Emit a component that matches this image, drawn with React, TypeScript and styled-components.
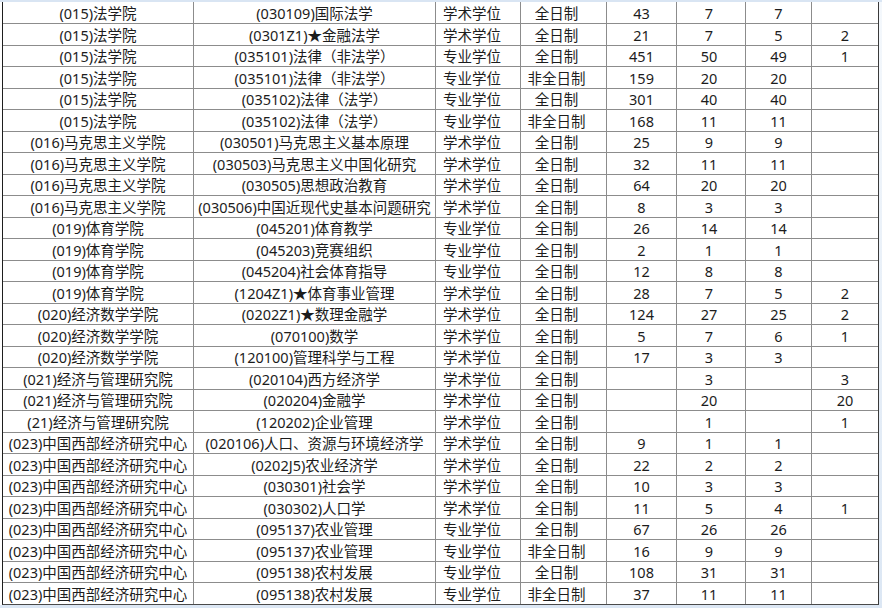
import styled, { createGlobalStyle } from 'styled-components';

const Global = createGlobalStyle`
	html, body { margin: 0; padding: 0; background: #fff; }
	body { font-family: "Noto Sans", "Noto Sans CJK SC", sans-serif; }
`

const Frame = styled.div`
	width: 882px;
	height: 608px;
	overflow: hidden;
	box-sizing: border-box;
	border-top: 2px solid #d9e5f3;
	background: linear-gradient(#f4f8fc, #dce7f4);
`

const Paper = styled.div`
	width: 879px;
	background: #fff;
	padding-left: 2px;
	box-sizing: border-box;
`

const Sheet = styled.div`
	display: grid;
	grid-template-columns: 190px 241px 84px 85px 69px 68px 65px 66px;
	grid-template-rows: 21px repeat(27, 20.5px);
	gap: 1px;
	width: 877px;
	box-sizing: border-box;
	background: #8c8c8c;
	border-left: 1px solid #1e1e1e;
	border-right: 1px solid #3a3a3a;
	border-bottom: 1px solid #4a4a4a;
`

const Cell = styled.div<{ $right?: number; $tight?: boolean }>`
	background: #fff;
	display: flex;
	align-items: flex-end;
	justify-content: center;
	padding-right: ${p => p.$right ?? 0}px;
	font-family: "Noto Sans", "Noto Sans CJK SC", sans-serif;
	font-size: 14.5px;
	line-height: 19px;
	color: #1c1c1c;
	white-space: nowrap;
	overflow: hidden;
	letter-spacing: ${p => (p.$tight ? '-1.05px' : '0')};
`

type Row = [string, string, string, string, string, string, string, string]

const X = '(023)中国西部经济研究中心'

const rows: Row[] = [
	['(015)法学院', '(030109)国际法学', '学术学位', '全日制', '43', '7', '7', ''],
	['(015)法学院', '(0301Z1)★金融法学', '学术学位', '全日制', '21', '7', '5', '2'],
	['(015)法学院', '(035101)法律（非法学）', '专业学位', '全日制', '451', '50', '49', '1'],
	['(015)法学院', '(035101)法律（非法学）', '专业学位', '非全日制', '159', '20', '20', ''],
	['(015)法学院', '(035102)法律（法学）', '专业学位', '全日制', '301', '40', '40', ''],
	['(015)法学院', '(035102)法律（法学）', '专业学位', '非全日制', '168', '11', '11', ''],
	['(016)马克思主义学院', '(030501)马克思主义基本原理', '学术学位', '全日制', '25', '9', '9', ''],
	['(016)马克思主义学院', '(030503)马克思主义中国化研究', '学术学位', '全日制', '32', '11', '11', ''],
	['(016)马克思主义学院', '(030505)思想政治教育', '学术学位', '全日制', '64', '20', '20', ''],
	['(016)马克思主义学院', '(030506)中国近现代史基本问题研究', '学术学位', '全日制', '8', '3', '3', ''],
	['(019)体育学院', '(045201)体育教学', '专业学位', '全日制', '26', '14', '14', ''],
	['(019)体育学院', '(045203)竞赛组织', '专业学位', '全日制', '2', '1', '1', ''],
	['(019)体育学院', '(045204)社会体育指导', '专业学位', '全日制', '12', '8', '8', ''],
	['(019)体育学院', '(1204Z1)★体育事业管理', '学术学位', '全日制', '28', '7', '5', '2'],
	['(020)经济数学学院', '(0202Z1)★数理金融学', '学术学位', '全日制', '124', '27', '25', '2'],
	['(020)经济数学学院', '(070100)数学', '学术学位', '全日制', '5', '7', '6', '1'],
	['(020)经济数学学院', '(120100)管理科学与工程', '学术学位', '全日制', '17', '3', '3', ''],
	['(021)经济与管理研究院', '(020104)西方经济学', '学术学位', '全日制', '', '3', '', '3'],
	['(021)经济与管理研究院', '(020204)金融学', '学术学位', '全日制', '', '20', '', '20'],
	['(21)经济与管理研究院', '(120202)企业管理', '学术学位', '全日制', '', '1', '', '1'],
	[X, '(020106)人口、资源与环境经济学', '学术学位', '全日制', '9', '1', '1', ''],
	[X, '(0202J5)农业经济学', '学术学位', '全日制', '22', '2', '2', ''],
	[X, '(030301)社会学', '学术学位', '全日制', '10', '3', '3', ''],
	[X, '(030302)人口学', '学术学位', '全日制', '11', '5', '4', '1'],
	[X, '(095137)农业管理', '专业学位', '全日制', '67', '26', '26', ''],
	[X, '(095137)农业管理', '专业学位', '非全日制', '16', '9', '9', ''],
	[X, '(095138)农村发展', '专业学位', '全日制', '108', '31', '31', ''],
	[X, '(095138)农村发展', '专业学位', '非全日制', '37', '11', '11', ''],
]

// shift of the text centre inside a column, as in the sheet
const shift = [0, 0, 12, 14, 0, 4, 0, 0]

const App = () => {
	return (
		<Frame>
			<Global />
			<Paper>
				<Sheet>
					{rows.map((r, i) =>
						r.map((v, j) => (
							<Cell key={i + '-' + j} $right={shift[j]} $tight={v.length > 20}>
								{v}
							</Cell>
						))
					)}
				</Sheet>
			</Paper>
		</Frame>
	)
}

export default App
